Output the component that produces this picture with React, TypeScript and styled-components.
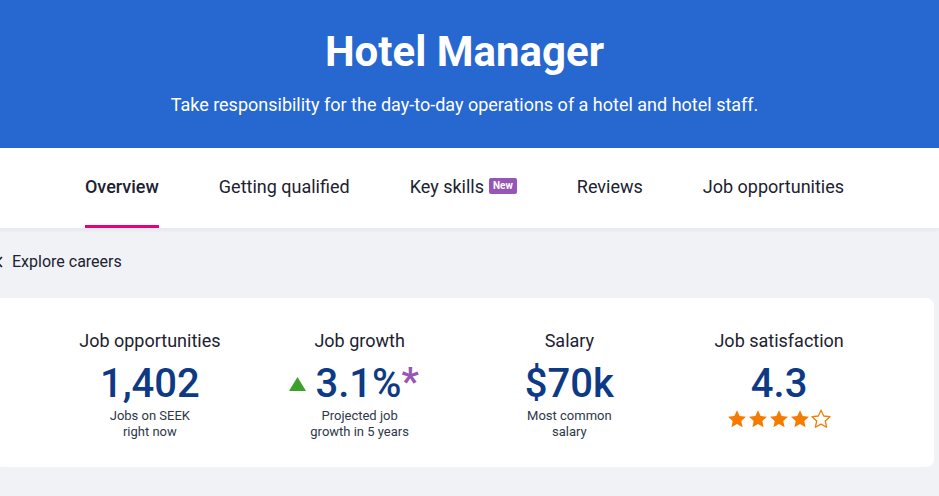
import styled, { createGlobalStyle } from "styled-components";

const GlobalStyle = createGlobalStyle`
  * {
    box-sizing: border-box;
  }
  body {
    margin: 0;
    background: #f0f2f6;
    font-family: Roboto, "Liberation Sans", Arial, sans-serif;
    overflow: hidden;
  }
`;

// the page is a bit wider than the window and sits 10px to the left
const Page = styled.div`
  width: calc(100% + 10px);
  margin-left: -10px;
  min-height: 100vh;
  background: #f0f2f6;
`;

const Hero = styled.header`
  background: #2767d0;
  color: #fff;
  text-align: center;
  padding: 27px 0 29px;
`;

const Title = styled.h1`
  margin: 0;
  font-size: 42px;
  line-height: 50px;
  font-weight: 700;
`;

const Lead = styled.p`
  margin: 14px 0 0;
  font-size: 18px;
  line-height: 28px;
`;

const Tabs = styled.nav`
  height: 80px;
  background: #fff;
  display: flex;
  justify-content: center;
  gap: 60px;
  box-shadow: 0 2px 4px rgba(28, 35, 55, 0.06);
  position: relative;
`;

interface ITab {
  active?: boolean;
}

const Tab = styled.a<ITab>`
  height: 80px;
  display: flex;
  align-items: center;
  gap: 5px;
  border-bottom: 3px solid ${({ active }) => (active ? "#e60278" : "transparent")};
  font-size: 18px;
  font-weight: ${({ active }) => (active ? 500 : 400)};
  color: #1c2230;
  cursor: pointer;
`;

const Badge = styled.span`
  background: #9556b7;
  color: #fff;
  font-size: 10px;
  font-weight: 700;
  line-height: 16px;
  padding: 0 4px;
  border-radius: 2px;
  margin-top: -2px;
`;

const Main = styled.main`
  padding: 0 5px;
`;

const BackLink = styled.a`
  display: flex;
  align-items: center;
  gap: 9px;
  padding: 22px 0 24px;
  font-size: 16px;
  line-height: 24px;
  color: #1c2230;
`;

const Card = styled.section`
  background: #fff;
  border-radius: 8px;
  padding: 31px 50px 27px;
  display: grid;
  grid-template-columns: repeat(4, 1fr);
`;

const Stat = styled.div`
  display: flex;
  flex-direction: column;
  align-items: center;
  text-align: center;
`;

const StatLabel = styled.div`
  font-size: 18px;
  line-height: 24px;
  color: #1c2230;
  margin-bottom: 7px;
`;

const StatValue = styled.div`
  display: flex;
  align-items: center;
  gap: 9px;
  font-size: 40px;
  font-weight: 500;
  line-height: 48px;
  color: #0e3a85;
`;

const Asterisk = styled.span`
  color: #9556b7;
  font-weight: 700;
  margin-left: -9px;
  margin-right: 11px;
  align-self: flex-start;
  font-size: 38px;
  line-height: 44px;
`;

const Caption = styled.div`
  font-size: 13px;
  line-height: 16px;
  color: #2e3849;
`;

const Stars = styled.div`
  display: flex;
  gap: 1px;
  margin-top: 1px;
`;

const STAR = "M10 1.2l2.7 5.8 6.3.7-4.7 4.3 1.3 6.2L10 15.1l-5.6 3.1 1.3-6.2L1 7.7l6.3-.7z";

const Star = ({ filled }: { filled: boolean }) => (
  <svg width="20" height="20" viewBox="0 0 20 20">
    <path
      d={STAR}
      fill={filled ? "#f57c00" : "none"}
      stroke="#f57c00"
      strokeWidth={filled ? 0 : 1.3}
      strokeLinejoin="round"
    />
  </svg>
);

const tabs = ["Overview", "Getting qualified", "Key skills", "Reviews", "Job opportunities"];

const App = () => {
  const rating = 4;
  return (
    <Page>
      <GlobalStyle />
      <Hero>
        <Title>Hotel Manager</Title>
        <Lead>Take responsibility for the day-to-day operations of a hotel and hotel staff.</Lead>
      </Hero>
      <Tabs>
        {tabs.map((t, i) => (
          <Tab key={t} active={i === 0}>
            {t}
            {t === "Key skills" && <Badge>New</Badge>}
          </Tab>
        ))}
      </Tabs>
      <Main>
        <BackLink>
          <svg width="8" height="12" viewBox="0 0 8 12">
            <path d="M7 1L2 6l5 5" fill="none" stroke="#1c2230" strokeWidth="1.6" />
          </svg>
          Explore careers
        </BackLink>
        <Card>
          <Stat>
            <StatLabel>Job opportunities</StatLabel>
            <StatValue>1,402</StatValue>
            <Caption>
              Jobs on SEEK
              <br />
              right now
            </Caption>
          </Stat>
          <Stat>
            <StatLabel>Job growth</StatLabel>
            <StatValue>
              <svg width="17" height="14" viewBox="0 0 17 14">
                <path d="M8.5 0L17 14H0z" fill="#3da02c" />
              </svg>
              <span>3.1%</span>
              <Asterisk>*</Asterisk>
            </StatValue>
            <Caption>
              Projected job
              <br />
              growth in 5 years
            </Caption>
          </Stat>
          <Stat>
            <StatLabel>Salary</StatLabel>
            <StatValue>$70k</StatValue>
            <Caption>
              Most common
              <br />
              salary
            </Caption>
          </Stat>
          <Stat>
            <StatLabel>Job satisfaction</StatLabel>
            <StatValue>4.3</StatValue>
            <Stars>
              {[0, 1, 2, 3, 4].map((n) => (
                <Star key={n} filled={n < rating} />
              ))}
            </Stars>
          </Stat>
        </Card>
      </Main>
    </Page>
  );
};

export default App;
